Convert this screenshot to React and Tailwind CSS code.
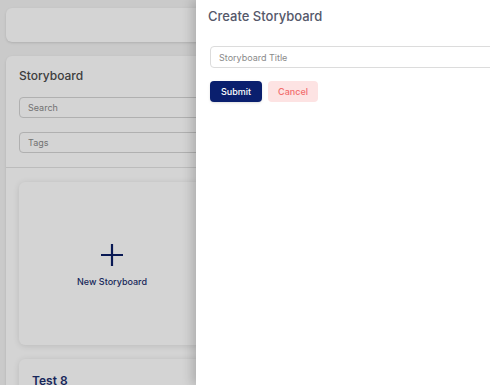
export default function App() {
  return (
    <div className="relative h-[385px] w-[490px] overflow-hidden bg-[#f3f3f3]" style={{ fontFamily: "Inter, 'Noto Sans', sans-serif" }}>
      {/* Page behind the drawer */}
      <div className="flex flex-col gap-[14px] px-[6px] pt-[8px]">
        <div className="h-[34px] w-[520px] rounded-md bg-white shadow-sm" />

        <div className="w-[520px] rounded-md bg-white shadow-sm">
          <div className="flex flex-col px-[13px] pb-[14px] pt-[12px]">
            <h2 className="text-[12px] font-medium leading-[16px] text-[#4b4b4b]">Storyboard</h2>
            <input
              className="mt-[13px] h-[21px] w-full rounded-[4px] border border-[#d4d4d4] px-[8px] text-[9px] placeholder:text-[#8a8a8a]"
              placeholder="Search"
            />
            <input
              className="mt-[14px] h-[21px] w-full rounded-[4px] border border-[#d4d4d4] px-[8px] text-[9px] placeholder:text-[#8a8a8a]"
              placeholder="Tags"
            />
          </div>
          <div className="flex flex-col gap-[14px] border-t border-[#e2e2e2] px-[13px] pt-[14px]">
            <div className="flex h-[163px] w-[186px] flex-col items-center justify-center rounded-md bg-white shadow-[0_1px_6px_rgba(0,0,0,0.12)]">
              <svg width="24" height="24" viewBox="0 0 24 24" className="mt-[4px]">
                <path d="M12 1v22M1 12h22" stroke="#0b1f66" strokeWidth="2.2" fill="none" />
              </svg>
              <span className="mt-[8px] text-[9px] font-medium text-[#1c2f6e]">New Storyboard</span>
            </div>
            <div className="h-[60px] w-[186px] rounded-md bg-white px-[13px] pt-[8px] shadow-[0_1px_6px_rgba(0,0,0,0.12)]">
              <span className="text-[12px] font-semibold leading-[16px] text-[#1c2f6e]">Test 8</span>
            </div>
          </div>
        </div>
      </div>

      {/* Overlay */}
      <div className="absolute inset-0 bg-black/[0.17]" />

      {/* Drawer */}
      <div className="absolute bottom-0 left-[196px] top-0 w-[320px] bg-white px-[12px] pt-[7px] shadow-[-4px_0_10px_rgba(0,0,0,0.18)]">
        <h1 className="text-[13px] font-medium leading-[18px] text-[#55586a]">Create Storyboard</h1>
        <input
          className="ml-[2px] mt-[21px] h-[22px] w-[300px] rounded-[4px] border border-[#dcdcdc] px-[8px] text-[9px] placeholder:text-[#8a8a8a]"
          placeholder="Storyboard Title"
        />
        <div className="ml-[2px] mt-[13px] flex gap-[6px]">
          <button className="h-[21px] w-[52px] rounded-[4px] bg-[#0a1f6e] text-[9px] font-medium text-white shadow-sm">
            Submit
          </button>
          <button className="h-[21px] w-[50px] rounded-[4px] bg-[#fde3e3] text-[9px] font-medium text-[#f26d6d]">
            Cancel
          </button>
        </div>
      </div>
    </div>
  );
}
